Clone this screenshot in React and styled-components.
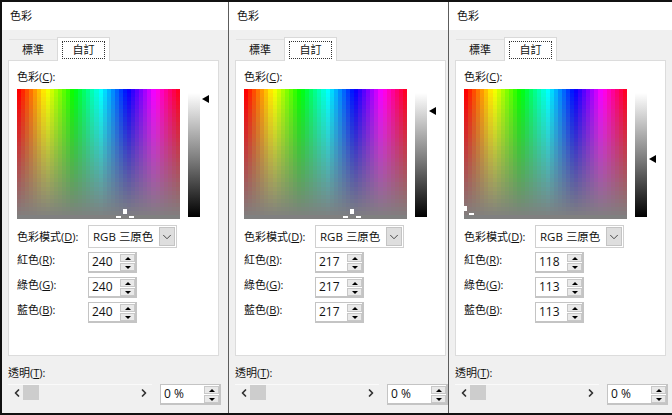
import React from "react";
import styled, { createGlobalStyle } from "styled-components";
import { ChevronDown, ChevronLeft, ChevronRight } from "lucide-react";

const GlobalStyle = createGlobalStyle`
  html, body {
    margin: 0;
    padding: 0;
    background: #000;
  }
  * {
    box-sizing: border-box;
  }
`;

const Page = styled.div`
  display: flex;
  width: 672px;
  height: 415px;
  overflow: hidden;
  padding: 2px 0 2px 2px;
  background: #111;
  font-family: "Open Sans", "Noto Sans CJK TC", sans-serif;
  font-size: 11px;
  line-height: 16px;
  color: #111;
`;

const Panel = styled.section`
  flex: none;
  width: ${(p) => p.$width}px;
  height: 100%;
  overflow: hidden;
  background: #f0f0f0;
  & + & {
    border-left: 1px solid #5c5c5c;
  }
`;

const Title = styled.div`
  height: 28px;
  padding: 6px 8px;
  background: #fff;
`;

const Body = styled.div`
  width: 223px;
  padding: 7px 0 0 6px;
`;

const TabBar = styled.div`
  display: flex;
  align-items: flex-end;
  height: 23px;
  padding-left: 1px;
`;

const Tab = styled.div`
  display: flex;
  align-items: center;
  justify-content: center;
  width: 48px;
  height: 21px;
  border-top: 1px solid #e2e2e2;
`;

const ActiveTab = styled.div`
  position: relative;
  z-index: 1;
  display: flex;
  align-items: center;
  justify-content: center;
  width: 53px;
  height: 24px;
  margin-bottom: -1px;
  background: #fff;
  border: 1px solid #d9d9d9;
  border-bottom: none;
`;

const FocusRing = styled.span`
  display: flex;
  align-items: center;
  justify-content: center;
  width: 43px;
  height: 18px;
  border: 1px dotted #333;
`;

const Box = styled.div`
  width: 211px;
  height: 296px;
  padding: 8px;
  background: #fff;
  border: 1px solid #dcdcdc;
`;

const Picker = styled.div`
  display: flex;
  margin-top: 4px;
`;

const Spectrum = styled.svg`
  display: block;
  flex: none;
  width: 163px;
  height: 130px;
`;

const LumTrack = styled.div`
  position: relative;
  width: 12px;
  height: 124px;
  margin: 4px 0 0 8px;
  background: linear-gradient(#fff, #808080 52%, #000);
`;

const LumArrow = styled.span`
  position: absolute;
  left: 14px;
  width: 0;
  height: 0;
  border-style: solid;
  border-width: 4px 7px 4px 0;
  border-color: transparent #000 transparent transparent;
`;

const Form = styled.div`
  display: grid;
  grid-template-columns: 71px auto;
  justify-content: start;
  row-gap: 4px;
  margin-top: 6px;
`;

const FieldLabel = styled.label`
  align-self: ${(p) => (p.$center ? "center" : "start")};
  white-space: nowrap;
`;

const Select = styled.div`
  display: flex;
  justify-content: space-between;
  width: 89px;
  height: 23px;
  padding: 1px;
  background: #fff;
  border: 1px solid #d0d0d0;
`;

const SelectText = styled.span`
  padding: 2px 0 0 3px;
  font-size: 11.5px;
  white-space: nowrap;
`;

const SelectButton = styled.span`
  display: flex;
  align-items: center;
  justify-content: center;
  width: 16px;
  background: #dedede;
  border: 1px solid #c4c4c4;
  color: #333;
`;

const Spin = styled.div`
  display: flex;
  width: ${(p) => p.$width}px;
  height: 21px;
  background: #fff;
  border: 2px solid #c4c4c4;
  border-width: 1px 2px 2px 1px;
`;

const SpinValue = styled.span`
  flex: 1;
  padding: 1px 0 0 3px;
  font-size: 12px;
`;

const SpinButtons = styled.div`
  display: flex;
  flex-direction: column;
  gap: 1px;
  width: 15px;
  padding: 1px 0 0;
`;

const SpinButton = styled.span`
  flex: 1;
  display: flex;
  align-items: center;
  justify-content: center;
  background: #e9e9e9;
  border: 1px solid #c8c8c8;
  &::after {
    content: "";
    width: 0;
    height: 0;
    border-left: 3px solid transparent;
    border-right: 3px solid transparent;
    border-top: ${(p) => (p.$down ? "3px solid #000" : "none")};
    border-bottom: ${(p) => (p.$down ? "none" : "3px solid #000")};
  }
`;

const OpacityLabel = styled.label`
  display: block;
  margin: 9px 0 3px 0;
`;

const OpacityRow = styled.div`
  display: flex;
  align-items: flex-start;
  gap: 8px;
`;

const Scroll = styled.div`
  display: flex;
  align-items: center;
  justify-content: space-between;
  width: 144px;
  height: 16px;
  padding-right: 2px;
  border-top: 1px solid #fafafa;
  color: #333;
`;

const ScrollStart = styled.div`
  display: flex;
  align-items: center;
  margin-left: 3px;
`;

const Thumb = styled.span`
  width: 16px;
  height: 15px;
  background: #cdcdcd;
`;

const COLS = 40;
const ROWS = 32;

const cells = [];
for (let r = 0; r < ROWS; r++) {
  for (let c = 0; c < COLS; c++) {
    const hue = (c / COLS) * 360;
    const sat = 100 - (r / (ROWS - 1)) * 100;
    cells.push({ r, c, fill: `hsl(${hue}, ${sat}%, 50%)` });
  }
}

// The palette, with the pieces of the picker cross on top of it
const Palette = ({ x, y }) => (
  <Spectrum viewBox="0 0 163 130" shapeRendering="crispEdges">
    {cells.map((cell) => (
      <rect
        key={`${cell.r}-${cell.c}`}
        x={(cell.c * 163) / COLS}
        y={(cell.r * 130) / ROWS}
        width={163 / COLS + 0.5}
        height={130 / ROWS + 0.5}
        fill={cell.fill}
      />
    ))}
    <rect x={x - 2} y={y - 10} width="4" height="5" fill="#fff" />
    <rect x={x - 9} y={y - 3} width="5" height="2" fill="#fff" />
    <rect x={x + 4} y={y - 3} width="5" height="2" fill="#fff" />
  </Spectrum>
);

const SpinBox = ({ value, width = 49 }) => (
  <Spin $width={width}>
    <SpinValue>{value}</SpinValue>
    <SpinButtons>
      <SpinButton />
      <SpinButton $down />
    </SpinButtons>
  </Spin>
);

const panels = [
  { width: 226, value: 240, mark: { x: 108, y: 130 }, arrow: 2 },
  { width: 220, value: 217, mark: { x: 108, y: 130 }, arrow: 14 },
  { width: 224, value: "118", green: 113, mark: { x: 1, y: 127 }, arrow: 62 },
];

const ColorPanel = ({ width, value, green, mark, arrow }) => (
  <Panel $width={width}>
    <Title>色彩</Title>
    <Body>
      <TabBar>
        <Tab>標準</Tab>
        <ActiveTab>
          <FocusRing>自訂</FocusRing>
        </ActiveTab>
      </TabBar>
      <Box>
        <label>
          色彩(<u>C</u>):
        </label>
        <Picker>
          <Palette x={mark.x} y={mark.y} />
          <LumTrack>
            <LumArrow style={{ top: arrow }} />
          </LumTrack>
        </Picker>
        <Form>
          <FieldLabel $center>
            色彩模式(<u>D</u>):
          </FieldLabel>
          <Select>
            <SelectText>RGB 三原色</SelectText>
            <SelectButton>
              <ChevronDown size={14} strokeWidth={1.5} />
            </SelectButton>
          </Select>
          <FieldLabel>
            紅色(<u>R</u>):
          </FieldLabel>
          <SpinBox value={value} />
          <FieldLabel>
            綠色(<u>G</u>):
          </FieldLabel>
          <SpinBox value={green ?? value} />
          <FieldLabel>
            藍色(<u>B</u>):
          </FieldLabel>
          <SpinBox value={green ?? value} />
        </Form>
      </Box>
      <OpacityLabel>
        透明(<u>T</u>):
      </OpacityLabel>
      <OpacityRow>
        <Scroll>
          <ScrollStart>
            <ChevronLeft size={12} strokeWidth={3.5} />
            <Thumb />
          </ScrollStart>
          <ChevronRight size={12} strokeWidth={3.5} />
        </Scroll>
        <SpinBox value="0 %" width={61} />
      </OpacityRow>
    </Body>
  </Panel>
);

export default function App() {
  return (
    <>
      <GlobalStyle />
      <Page>
        {panels.map((panel) => (
          <ColorPanel key={panel.arrow} {...panel} />
        ))}
      </Page>
    </>
  );
}
